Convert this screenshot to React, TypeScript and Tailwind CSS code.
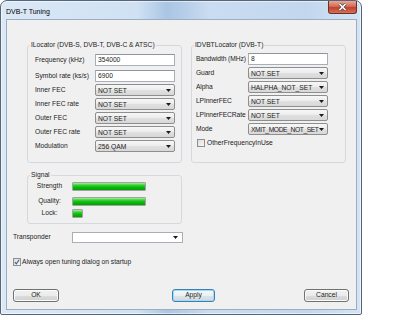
const locatorRows = [
  { label: 'Frequency (kHz)', value: '354000', combo: false },
  { label: 'Symbol rate (ks/s)', value: '6900', combo: false },
  { label: 'Inner FEC', value: 'NOT SET', combo: true },
  { label: 'Inner FEC rate', value: 'NOT SET', combo: true },
  { label: 'Outer FEC', value: 'NOT SET', combo: true },
  { label: 'Outer FEC rate', value: 'NOT SET', combo: true },
  { label: 'Modulation', value: '256 QAM', combo: true },
]

const dvbtRows = [
  { label: 'Bandwidth (MHz)', value: '8', combo: false },
  { label: 'Guard', value: 'NOT SET', combo: true },
  { label: 'Alpha', value: 'HALPHA_NOT_SET', combo: true },
  { label: 'LPInnerFEC', value: 'NOT SET', combo: true },
  { label: 'LPInnerFECRate', value: 'NOT SET', combo: true },
  { label: 'Mode', value: 'XMIT_MODE_NOT_SET', combo: true, tight: true },
]

const signalRows = [
  { label: 'Strength', width: 74, gap: 'mt-0' },
  { label: 'Quality:', width: 74, gap: 'mt-[6px]' },
  { label: 'Lock:', width: 11, gap: 'mt-[3px]' },
]

function Arrow() {
  return (
    <svg width="5" height="3" viewBox="0 0 5 3" className="shrink-0">
      <path d="M0 0h5L2.5 3z" fill="#1b1b1b" />
    </svg>
  )
}

function Field({ value, combo, tight }: { value: string; combo: boolean; tight?: boolean }) {
  if (!combo) {
    return (
      <div className="w-[80px] h-[12px] flex items-center border border-[#a9afb8] border-t-[#8e959e] bg-white pl-[2px] leading-none">
        {value}
      </div>
    )
  }
  return (
    <div className="w-[80px] h-[12px] flex items-center justify-between border border-[#8e8e8e] rounded-[2px] bg-[linear-gradient(to_bottom,#f7f7f7_0%,#ececec_50%,#e0e0e0_51%,#d8d8d8_100%)] pl-[2px] pr-[3px] whitespace-nowrap">
      <span className={`leading-[9px] ${tight ? 'tracking-[-0.4px]' : ''}`}>{value}</span>
      <Arrow />
    </div>
  )
}

function CheckBox({ checked }: { checked: boolean }) {
  return (
    <div className="w-[8px] h-[8px] shrink-0 border border-[#8f8f8f] bg-[linear-gradient(to_bottom_right,#dcdcdc,#f8f8f8)] flex items-center justify-center">
      {checked && (
        <svg width="6" height="6" viewBox="0 0 6 6">
          <path d="M0.8 3.2L2.3 4.8L5.2 0.8" stroke="#3b5a9a" strokeWidth="1.1" fill="none" />
        </svg>
      )}
    </div>
  )
}

function Button({ label, width, focused }: { label: string; width: string; focused?: boolean }) {
  return (
    <div
      className={`${width} h-[13px] flex items-center justify-center rounded-[3px] border leading-none ${
        focused
          ? 'border-[#3c7fb1] shadow-[inset_0_0_0_1px_#9edcf7] bg-[linear-gradient(to_bottom,#f4f8fa_0%,#ebf0f3_50%,#dde3e7_51%,#d2d9de_100%)]'
          : 'border-[#707070] shadow-[inset_0_0_0_1px_#fbfbfb] bg-[linear-gradient(to_bottom,#f2f2f2_0%,#ebebeb_50%,#dddddd_51%,#cfcfcf_100%)]'
      }`}
    >
      {label}
    </div>
  )
}

export default function App() {
  return (
    <div className="w-[400px] h-[320px] bg-white font-['Liberation_Sans',Arial,sans-serif] text-[6.7px] text-[#1c1c1c]">
      <div className="w-[362px] h-[315px] flex flex-col rounded-t-[7px] rounded-b-[2px] border border-[#56667a] shadow-[inset_0_0_0_1px_rgba(255,255,255,0.55)] bg-[linear-gradient(90deg,#dbe8f6_0%,#cfe1f3_38%,#aac6e4_46%,#b3cce8_50%,#cadcf1_58%,#c2d7ee_85%,#d4e4f5_100%)]">
        {/* Title bar */}
        <div className="h-[18px] flex justify-between">
          <span className="pl-[5px] pt-[7px] text-[7px] leading-none text-black">DVB-T Tuning</span>
          <div className="mr-[4px] w-[29px] h-[13px] rounded-b-[3px] border border-t-0 border-[#6b3127] bg-[linear-gradient(to_bottom,#e9a897_0%,#d86a53_45%,#c2412b_55%,#d5705a_100%)] flex items-center justify-center">
            <svg width="9" height="8" viewBox="0 0 9 8">
              <path d="M1.5 1L7.5 7M7.5 1L1.5 7" stroke="#4b4b4b" strokeWidth="3" />
              <path d="M1.5 1L7.5 7M7.5 1L1.5 7" stroke="#ffffff" strokeWidth="1.6" />
            </svg>
          </div>
        </div>

        {/* Client area */}
        <div className="flex-1 mb-[4px] ml-[5px] mr-[4px] border border-[#9badc3] bg-[#f0f0f0] flex flex-col pt-[21px]">
          <div className="flex ml-[20px]">
            <fieldset className="w-[155px] border border-[#d5d9de] rounded-[3px] m-0 p-0">
              <legend className="ml-[2px] px-[1px] leading-[8px]">ILocator (DVB-S, DVB-T, DVB-C &amp; ATSC)</legend>
              <div className="flex flex-col gap-[2px] pt-[5px] pb-[10px] pl-[7px]">
                {locatorRows.map((r, i) => (
                  <div key={r.label} className={`flex items-center h-[12px] ${i === 0 ? 'mb-[2px]' : ''}`}>
                    <span className="w-[60px] leading-none">{r.label}</span>
                    <Field value={r.value} combo={r.combo} />
                  </div>
                ))}
              </div>
            </fieldset>

            <fieldset className="ml-[9px] w-[155px] border border-[#d5d9de] rounded-[3px] m-0 p-0">
              <legend className="ml-[2px] px-[1px] leading-[8px]">IDVBTLocator (DVB-T)</legend>
              <div className="flex flex-col gap-[2px] pt-[4px] pl-[4px]">
                {dvbtRows.map((r) => (
                  <div key={r.label} className="flex items-center h-[12px]">
                    <span className="w-[52px] leading-none whitespace-nowrap tracking-[-0.1px]">{r.label}</span>
                    <Field value={r.value} combo={r.combo} tight={r.tight} />
                  </div>
                ))}
                <div className="flex items-center gap-[2px] mt-[2px] pl-[1px] h-[8px]">
                  <CheckBox checked={false} />
                  <span className="leading-none">OtherFrequencyInUse</span>
                </div>
              </div>
            </fieldset>
          </div>

          {/* Signal */}
          <fieldset className="ml-[20px] mt-[8px] w-[155px] border border-[#d5d9de] rounded-[3px] m-0 p-0">
            <legend className="ml-[2px] px-[1px] leading-[8px]">Signal</legend>
            <div className="flex flex-col pt-[3px] pb-[5px] pl-[3px]">
              {signalRows.map((s) => (
                <div key={s.label} className={`flex items-center h-[9px] ${s.gap}`}>
                  <span className="w-[37px] text-center leading-none">{s.label}</span>
                  <div
                    className="ml-[4px] h-[9px] rounded-[1px] border border-[#a3a3a3] bg-[linear-gradient(to_bottom,#a8eca8_0%,#3fd43f_28%,#0bbf0b_55%,#069c06_100%)]"
                    style={{ width: `${s.width}px` }}
                  />
                </div>
              ))}
            </div>
          </fieldset>

          {/* Transponder */}
          <div className="flex items-center mt-[8px] ml-[6px] h-[11px]">
            <span className="w-[59px] leading-none">Transponder</span>
            <div className="w-[111px] h-[11px] border border-[#a9afb8] bg-white flex items-center justify-end pr-[4px]">
              <Arrow />
            </div>
          </div>

          {/* Startup checkbox */}
          <div className="flex items-center gap-[1px] mt-[15px] ml-[6px] h-[8px]">
            <CheckBox checked />
            <span className="leading-none">Always open tuning dialog on startup</span>
          </div>

          {/* Buttons */}
          <div className="flex mt-[23px] ml-[6px]">
            <Button label="OK" width="w-[46px]" />
            <div className="ml-[113px]">
              <Button label="Apply" width="w-[43px]" focused />
            </div>
            <div className="ml-[89px]">
              <Button label="Cancel" width="w-[45px]" />
            </div>
          </div>
        </div>
      </div>
    </div>
  )
}
